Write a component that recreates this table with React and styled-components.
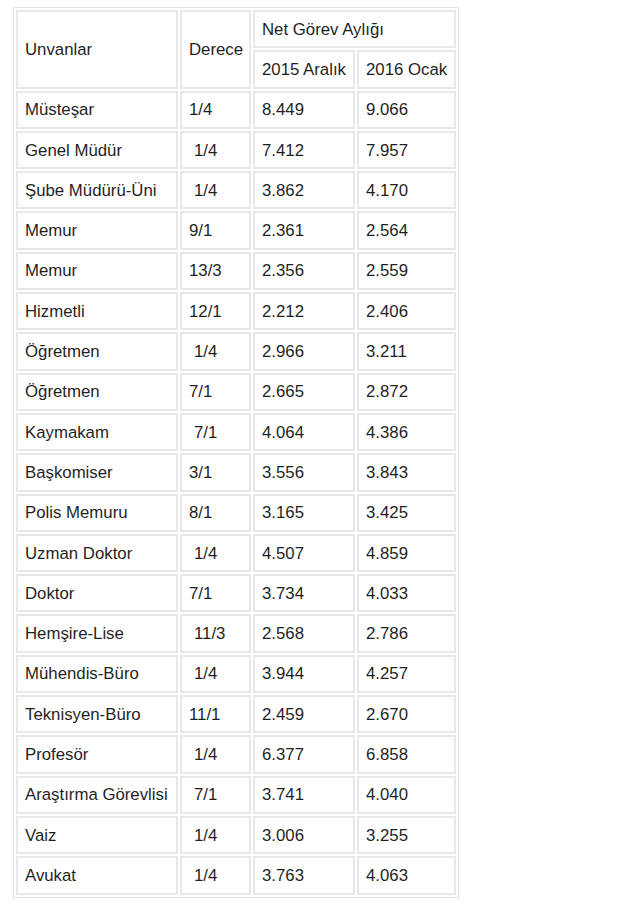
import React from 'react'
import styled, { createGlobalStyle } from 'styled-components'

const GlobalStyle = createGlobalStyle`
  html, body {
    margin: 0;
    padding: 0;
    background: #ffffff;
  }
  body {
    font-family: "Liberation Sans", Arial, sans-serif;
    color: #1f1f1f;
  }
`

const Page = styled.div`
  padding: 7px 0 0 13px;
`

const Table = styled.table`
  border: 1px solid #e2e2e2;
  border-collapse: separate;
  border-spacing: 2px;
  table-layout: fixed;
  width: 446px;
  font-size: 16.8px;
  line-height: 19px;
`

const Col = styled.col`
  width: ${({ $w }) => $w}px;
`

const Head = styled.th`
  box-sizing: border-box;
  height: 38.3px;
  padding: 0 4px 0 7px;
  border: 2px solid #e8e8e8;
  font-weight: normal;
  text-align: left;
  vertical-align: middle;
  white-space: nowrap;
`

const Cell = styled.td`
  box-sizing: border-box;
  height: 38.3px;
  padding: 0 2px 0 ${({ $indent }) => ($indent ? 12 : 7)}px;
  border: 2px solid #e8e8e8;
  vertical-align: middle;
  white-space: nowrap;
`

const rows = [
  ['Müsteşar', '1/4', false, '8.449', '9.066'],
  ['Genel Müdür', '1/4', true, '7.412', '7.957'],
  ['Şube Müdürü-Üni', '1/4', true, '3.862', '4.170'],
  ['Memur', '9/1', false, '2.361', '2.564'],
  ['Memur', '13/3', false, '2.356', '2.559'],
  ['Hizmetli', '12/1', false, '2.212', '2.406'],
  ['Öğretmen', '1/4', true, '2.966', '3.211'],
  ['Öğretmen', '7/1', false, '2.665', '2.872'],
  ['Kaymakam', '7/1', true, '4.064', '4.386'],
  ['Başkomiser', '3/1', false, '3.556', '3.843'],
  ['Polis Memuru', '8/1', false, '3.165', '3.425'],
  ['Uzman Doktor', '1/4', true, '4.507', '4.859'],
  ['Doktor', '7/1', false, '3.734', '4.033'],
  ['Hemşire-Lise', '11/3', true, '2.568', '2.786'],
  ['Mühendis-Büro', '1/4', true, '3.944', '4.257'],
  ['Teknisyen-Büro', '11/1', false, '2.459', '2.670'],
  ['Profesör', '1/4', true, '6.377', '6.858'],
  ['Araştırma Görevlisi', '7/1', true, '3.741', '4.040'],
  ['Vaiz', '1/4', true, '3.006', '3.255'],
  ['Avukat', '1/4', true, '3.763', '4.063'],
]

export default function App() {
  return (
    <Page>
      <GlobalStyle />
      <Table>
        <colgroup>
          <Col $w={162} />
          <Col $w={71} />
          <Col $w={102} />
          <Col $w={99} />
        </colgroup>
        <thead>
          <tr>
            <Head rowSpan={2}>Unvanlar</Head>
            <Head rowSpan={2}>Derece</Head>
            <Head colSpan={2}>Net Görev Aylığı</Head>
          </tr>
          <tr>
            <Head>2015 Aralık</Head>
            <Head>2016 Ocak</Head>
          </tr>
        </thead>
        <tbody>
          {rows.map(([title, grade, indent, dec, jan], i) => (
            <tr key={i}>
              <Cell>{title}</Cell>
              <Cell $indent={indent}>{grade}</Cell>
              <Cell>{dec}</Cell>
              <Cell>{jan}</Cell>
            </tr>
          ))}
        </tbody>
      </Table>
    </Page>
  )
}
